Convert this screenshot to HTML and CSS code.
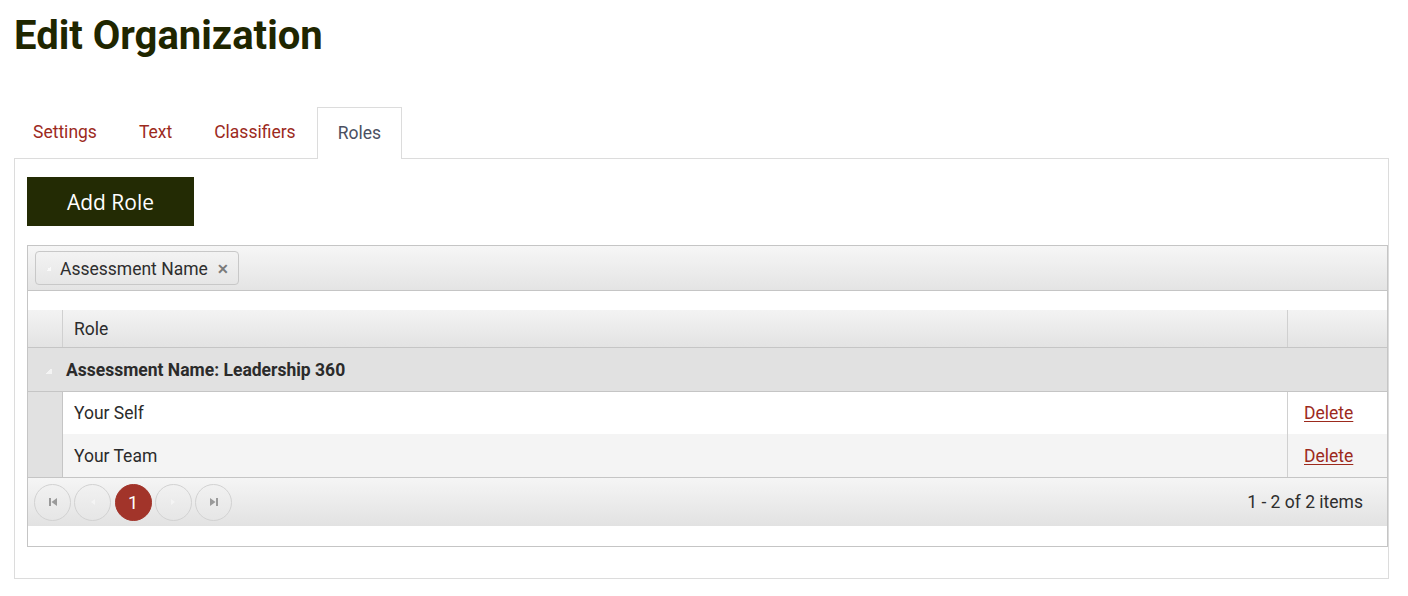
FILE: index.html
```
<!DOCTYPE html>
<html>
<head>
<meta charset="utf-8">
<link rel="stylesheet" href="styles.css">
</head>
<body>
<h1 class="title">Edit Organization</h1>
<div class="tabs">
  <a class="tab">Settings</a>
  <a class="tab">Text</a>
  <a class="tab">Classifiers</a>
  <a class="tab active">Roles</a>
</div>
<div class="panel">
  <button class="add-btn">Add Role</button>
  <div class="grid">
    <div class="group-bar">
      <div class="chip"><span class="chip-arrow"></span><span>Assessment Name</span><span class="chip-x">&#x2715;</span></div>
    </div>
    <div class="spacer"></div>
    <div class="row header">
      <div class="hier"></div>
      <div class="cell main">Role</div>
      <div class="cell act"></div>
    </div>
    <div class="group-row">
      <span class="group-arrow"></span>
      <span>Assessment Name: Leadership 360</span>
    </div>
    <div class="row data">
      <div class="hier gray"></div>
      <div class="cell main">Your Self</div>
      <div class="cell act"><a class="del">Delete</a></div>
    </div>
    <div class="row data alt">
      <div class="hier gray"></div>
      <div class="cell main">Your Team</div>
      <div class="cell act"><a class="del">Delete</a></div>
    </div>
    <div class="pager">
      <div class="pages">
        <span class="pbtn"><svg width="10" height="10" viewBox="0 0 10 10"><rect x="1" y="1" width="2" height="8" fill="#9a9a9a"/><path d="M9 1 L3.5 5 L9 9 Z" fill="#9a9a9a"/></svg></span>
        <span class="pbtn"><svg width="8" height="8" viewBox="0 0 8 8"><path d="M6 1 L2 4 L6 7 Z" fill="#f4f4f4"/></svg></span>
        <span class="pbtn current">1</span>
        <span class="pbtn"><svg width="8" height="8" viewBox="0 0 8 8"><path d="M2 1 L6 4 L2 7 Z" fill="#f4f4f4"/></svg></span>
        <span class="pbtn"><svg width="10" height="10" viewBox="0 0 10 10"><path d="M1 1 L6.5 5 L1 9 Z" fill="#9a9a9a"/><rect x="7" y="1" width="2" height="8" fill="#9a9a9a"/></svg></span>
      </div>
      <div class="info">1 - 2 of 2 items</div>
    </div>
    <div class="bottom-space"></div>
  </div>
</div>
</body>
</html>
```
FILE: styles.css
```
* { box-sizing: border-box; }
body {
  margin: 0;
  padding: 0 19px 0 14px;
  font-family: Roboto, "Liberation Sans", sans-serif;
  font-size: 17.5px;
  color: #2b2b2b;
  background: #fff;
}
.title {
  margin: 0;
  padding-top: 12px;
  height: 107px;
  font-size: 40px;
  font-weight: 700;
  color: #1f2600;
  line-height: 48px;
}
.tabs {
  display: flex;
  height: 51px;
  margin-left: -2px;
}
.tab {
  display: flex;
  align-items: center;
  padding: 0 20px 2px 20px;
  color: #9c2a1d;
  border: 1px solid transparent;
  border-bottom: none;
}
.tab.active {
  color: #4b5061;
  background: #fff;
  border-color: #dcdcdc;
  margin-bottom: -1px;
  position: relative;
  z-index: 1;
}
.panel {
  border: 1px solid #dcdcdc;
  padding: 18px 0 31px 12px;
}
.add-btn {
  display: block;
  width: 167px;
  height: 49px;
  background: #232b04;
  color: #fff;
  border: none;
  font-family: "Open Sans", sans-serif;
  font-size: 21px;
  font-weight: 500;
  padding: 1px 0 0 0;
  margin: 0 0 19px 0;
}
.grid {
  border: 1px solid #c5c5c5;
}
.group-bar {
  height: 45px;
  padding: 5px 7px;
  background: linear-gradient(#f6f6f6, #e4e4e4);
  border-bottom: 1px solid #c5c5c5;
}
.chip {
  display: inline-flex;
  align-items: center;
  height: 34px;
  padding: 1px 9px 0 10px;
  border: 1px solid #c8c8c8;
  border-radius: 4px;
  background: linear-gradient(#f3f3f3, #e6e6e6);
  color: #2e2e2e;
}
.chip-arrow {
  width: 5px; height: 5px;
  margin-right: 9px;
  background: linear-gradient(135deg, transparent 50%, #fafafa 50%);
}
.chip-x {
  margin-left: 9px;
  font-size: 14px;
  color: #7a7a7a;
  font-weight: 700;
}
.spacer { height: 19px; background: #fff; }
.row { display: flex; }
.row.header {
  height: 38px;
  background: linear-gradient(#f3f3f3, #e3e3e3);
  border-bottom: 1px solid #c5c5c5;
}
.hier {
  width: 35px;
  flex: none;
  border-right: 1px solid #d0d0d0;
}
.hier.gray { background: #e1e1e1; border-right-color: #c5c5c5; }
.cell {
  display: flex;
  align-items: center;
  padding: 0 11px;
}
.cell.main { flex: 1; }
.cell.act {
  width: 100px;
  flex: none;
  border-left: 1px solid #d0d0d0;
  padding-left: 16px;
}
.group-row {
  height: 44px;
  display: flex;
  align-items: center;
  background: #e1e1e1;
  font-weight: 700;
  padding-left: 18px;
  border-bottom: 1px solid #c5c5c5;
  color: #2b2b2b;
}
.group-arrow {
  width: 6px; height: 6px;
  margin-right: 14px;
  margin-top: 2px;
  background: linear-gradient(135deg, transparent 50%, #f4f4f4 50%);
}
.row.data { height: 42px; background: #fff; }
.row.data.alt { height: 43px; background: #f4f4f4; }
.del {
  color: #9c2a1d;
  text-decoration: underline;
  text-underline-offset: 2px;
}
.pager {
  height: 49px;
  display: flex;
  align-items: center;
  justify-content: space-between;
  padding: 0 24px 0 6px;
  background: linear-gradient(#f5f5f5, #e2e2e2);
  border-top: 1px solid #c5c5c5;
}
.pages { display: flex; gap: 3.3px; }
.pbtn {
  width: 37px;
  height: 37px;
  border-radius: 50%;
  border: 1px solid #d2d2d2;
  display: flex;
  align-items: center;
  justify-content: center;
  background: linear-gradient(#f1f1f1, #e6e6e6);
}
.pbtn.current {
  background: #a2342a;
  border-color: #a2342a;
  color: #fff;
  font-size: 18px;
}
.info { color: #2e2e2e; }
.bottom-space { height: 20px; background: #fff; }
```
